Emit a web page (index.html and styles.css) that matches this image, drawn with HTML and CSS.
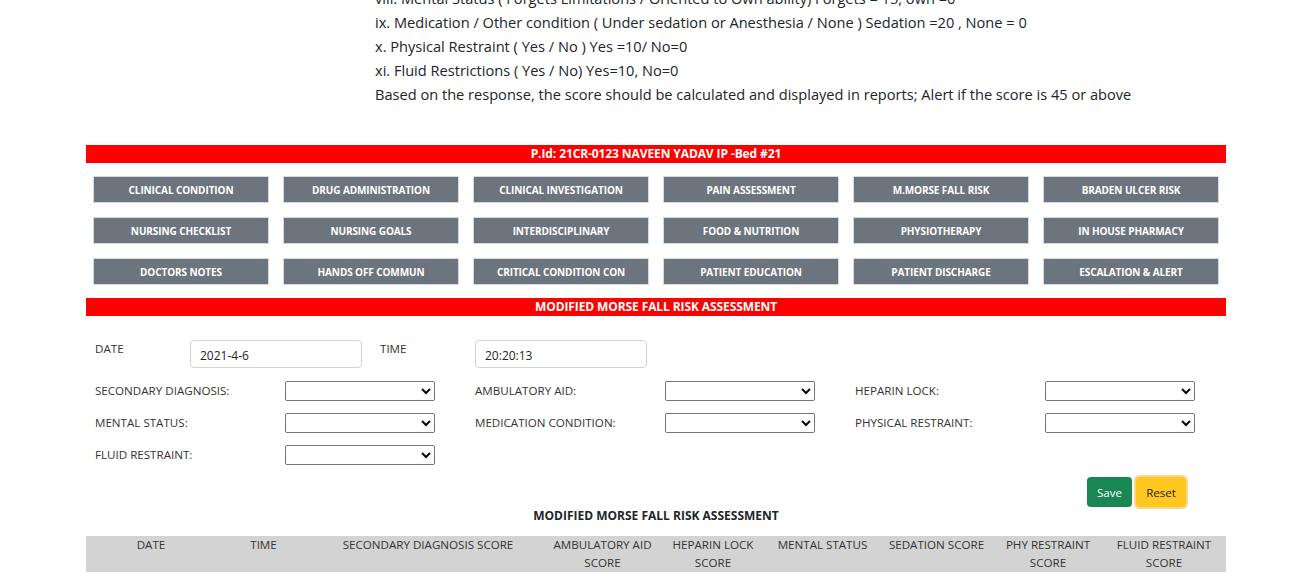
FILE: index.html
```html
<!DOCTYPE html>
<html lang="en">
<head>
<meta charset="utf-8">
<title>Modified Morse Fall Risk Assessment</title>
<link rel="stylesheet" href="styles.css">
</head>
<body>
<div class="notes">
  <p>viii. Mental Status ( Forgets Limitations / Oriented to Own ability) Forgets = 15, own =0</p>
  <p>ix. Medication / Other condition ( Under sedation or Anesthesia / None ) Sedation =20 , None = 0</p>
  <p>x. Physical Restraint ( Yes / No ) Yes =10/ No=0</p>
  <p>xi. Fluid Restrictions ( Yes / No) Yes=10, No=0</p>
  <p>Based on the response, the score should be calculated and displayed in reports; Alert if the score is 45 or above</p>
</div>

<div class="container">
  <div class="bar">P.Id: 21CR-0123 NAVEEN YADAV IP -Bed #21</div>

  <div class="nav-grid">
    <button class="nav-btn">CLINICAL CONDITION</button>
    <button class="nav-btn">DRUG ADMINISTRATION</button>
    <button class="nav-btn">CLINICAL INVESTIGATION</button>
    <button class="nav-btn">PAIN ASSESSMENT</button>
    <button class="nav-btn">M.MORSE FALL RISK</button>
    <button class="nav-btn">BRADEN ULCER RISK</button>
    <button class="nav-btn">NURSING CHECKLIST</button>
    <button class="nav-btn">NURSING GOALS</button>
    <button class="nav-btn">INTERDISCIPLINARY</button>
    <button class="nav-btn">FOOD &amp; NUTRITION</button>
    <button class="nav-btn">PHYSIOTHERAPY</button>
    <button class="nav-btn">IN HOUSE PHARMACY</button>
    <button class="nav-btn">DOCTORS NOTES</button>
    <button class="nav-btn">HANDS OFF COMMUN</button>
    <button class="nav-btn">CRITICAL CONDITION CON</button>
    <button class="nav-btn">PATIENT EDUCATION</button>
    <button class="nav-btn">PATIENT DISCHARGE</button>
    <button class="nav-btn">ESCALATION &amp; ALERT</button>
  </div>

  <div class="bar">MODIFIED MORSE FALL RISK ASSESSMENT</div>

  <form class="form">
    <div class="row row-first">
      <label class="lbl span1">DATE</label>
      <div class="cell span2"><input class="text-input" type="text" value="2021-4-6"></div>
      <label class="lbl span1">TIME</label>
      <div class="cell span2"><input class="text-input" type="text" value="20:20:13"></div>
    </div>
    <div class="row">
      <label class="lbl span2">SECONDARY DIAGNOSIS:</label>
      <div class="cell span2"><select class="sel"><option></option></select></div>
      <label class="lbl span2">AMBULATORY AID:</label>
      <div class="cell span2"><select class="sel"><option></option></select></div>
      <label class="lbl span2">HEPARIN LOCK:</label>
      <div class="cell span2"><select class="sel"><option></option></select></div>
    </div>
    <div class="row">
      <label class="lbl span2">MENTAL STATUS:</label>
      <div class="cell span2"><select class="sel"><option></option></select></div>
      <label class="lbl span2">MEDICATION CONDITION:</label>
      <div class="cell span2"><select class="sel"><option></option></select></div>
      <label class="lbl span2">PHYSICAL RESTRAINT:</label>
      <div class="cell span2"><select class="sel"><option></option></select></div>
    </div>
    <div class="row">
      <label class="lbl span2">FLUID RESTRAINT:</label>
      <div class="cell span2"><select class="sel"><option></option></select></div>
    </div>
  </form>

  <div class="actions">
    <button class="btn btn-save" type="button">Save</button>
    <button class="btn btn-reset" type="button">Reset</button>
  </div>

  <div class="table-title">MODIFIED MORSE FALL RISK ASSESSMENT</div>

  <table class="report">
    <colgroup>
      <col class="c1"><col class="c2"><col class="c3"><col class="c4"><col class="c5"><col class="c6"><col class="c7"><col class="c8"><col class="c9">
    </colgroup>
    <thead>
      <tr>
        <th>DATE</th>
        <th>TIME</th>
        <th>SECONDARY DIAGNOSIS SCORE</th>
        <th>AMBULATORY AID SCORE</th>
        <th>HEPARIN LOCK SCORE</th>
        <th>MENTAL STATUS</th>
        <th>SEDATION SCORE</th>
        <th>PHY RESTRAINT SCORE</th>
        <th>FLUID RESTRAINT SCORE</th>
      </tr>
    </thead>
  </table>
</div>
</body>
</html>
```

FILE: styles.css
```css
* { box-sizing: border-box; }

html, body {
  margin: 0;
  padding: 0;
  background: #ffffff;
  overflow: hidden;
}

body {
  font-family: "Open Sans", "Noto Sans", "DejaVu Sans", sans-serif;
  color: #212529;
}

.notes {
  margin-top: -14px;
  padding-left: 375px;
  font-size: 14.6px;
  line-height: 24px;
  color: #212529;
}

.notes p {
  margin: 0;
  white-space: nowrap;
}

.container {
  width: 1140px;
  margin: 39px 0 0 86px;
}

.bar {
  background: #ff0000;
  color: #ffffff;
  font-weight: 700;
  font-size: 12px;
  line-height: 18px;
  height: 18px;
  text-align: center;
  letter-spacing: -0.1px;
}

.nav-grid {
  display: grid;
  grid-template-columns: repeat(6, 1fr);
  column-gap: 14px;
  row-gap: 14px;
  padding: 13px 7px;
}

.nav-btn {
  height: 27px;
  background: #6c757d;
  border: 1px solid #d6dade;
  color: #ffffff;
  font-family: "Open Sans", "Noto Sans", sans-serif;
  font-weight: 700;
  font-size: 10px;
  letter-spacing: -0.1px;
  padding: 0;
  text-align: center;
}

.form {
  padding-top: 24px;
}

.row {
  display: grid;
  grid-template-columns: repeat(12, 95px);
  height: 20px;
  margin-bottom: 12px;
}

.row-first {
  height: 28px;
  margin-bottom: 13px;
}

.span1 { grid-column: span 1; }
.span2 { grid-column: span 2; }

.lbl {
  padding: 0 9px;
  font-size: 11.6px;
  line-height: 20px;
  color: #333333;
  white-space: nowrap;
}

.row-first .lbl {
  line-height: 18px;
}

.cell {
  padding: 0 9px;
  display: flex;
  align-items: flex-start;
}

.text-input {
  display: block;
  width: 172px;
  height: 28px;
  border: 1px solid #ced4da;
  border-radius: 4px;
  padding: 3px 9px 0;
  font-family: "Open Sans", "Noto Sans", sans-serif;
  font-size: 12px;
  color: #212529;
  background: #ffffff;
}

.sel {
  display: block;
  width: 150px;
  height: 20px;
  font-size: 12px;
  border: 1px solid #767676;
  border-radius: 2px;
  background: #ffffff;
  margin: 0;
}

.actions {
  display: flex;
  justify-content: flex-end;
  gap: 4px;
  padding-right: 40px;
}

.btn {
  height: 30px;
  border: none;
  border-radius: 4px;
  font-family: "Open Sans", "Noto Sans", sans-serif;
  font-size: 11.5px;
  padding: 0;
}

.btn-save {
  width: 45px;
  background: #198754;
  color: #ffffff;
}

.btn-reset {
  width: 50px;
  background: #ffc720;
  color: #212529;
  box-shadow: 0 0 0 2px #f3d98b;
}

.table-title {
  text-align: center;
  font-weight: 700;
  font-size: 12px;
  line-height: 18px;
  color: #212529;
  margin-bottom: 11px;
}

.report {
  width: 1140px;
  table-layout: fixed;
  border-collapse: collapse;
  background: #d3d3d3;
}

.report th {
  font-weight: 400;
  font-size: 11.6px;
  line-height: 18px;
  color: #333333;
  padding: 0 6px;
  text-align: center;
  vertical-align: top;
}

.c1 { width: 130px; }
.c2 { width: 95px; }
.c3 { width: 234px; }
.c4 { width: 115px; }
.c5 { width: 106px; }
.c6 { width: 113px; }
.c7 { width: 115px; }
.c8 { width: 108px; }
.c9 { width: 124px; }
```
